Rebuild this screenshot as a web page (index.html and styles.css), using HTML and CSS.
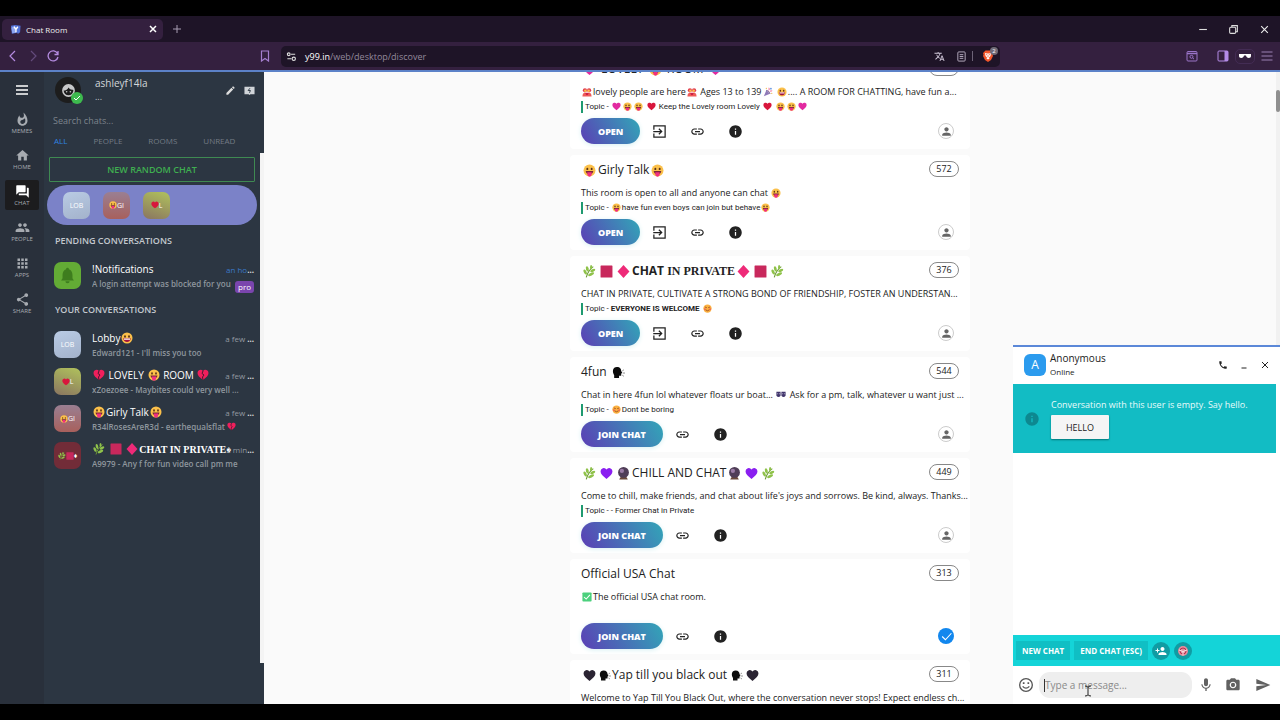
FILE: index.html
```
<!DOCTYPE html>
<html lang="en">
<head>
    <meta charset="UTF-8">
    <meta name="viewport" content="width=device-width, initial-scale=1.0">
    <title>Chat Room</title>
    <link rel="stylesheet" href="styles.css">
</head>
<body>

<!-- shared icons and emoji -->
<svg class="sprite" aria-hidden="true">
    <symbol id="tongue" viewBox="0 0 24 24"><circle cx="12" cy="12" r="11" fill="#fbc04a"/><ellipse cx="8" cy="9" rx="1.8" ry="2.3" fill="#5b3218"/><ellipse cx="16" cy="9" rx="1.8" ry="2.3" fill="#5b3218"/><path d="M5 13h14c-.5 4-3 6-7 6s-6.500-2-7-6z" fill="#7a2638"/><path d="M8 15h8v4.500a4 4 0 0 1-8 0z" fill="#f0307f"/></symbol>
    <symbol id="grin" viewBox="0 0 24 24"><circle cx="12" cy="12" r="11" fill="#fbc04a"/><ellipse cx="8" cy="9" rx="1.800" ry="2.500" fill="#5b3218"/><ellipse cx="16" cy="9" rx="1.800" ry="2.500" fill="#5b3218"/><path d="M4.500 12.500h15c-.5 5-3.500 7.500-7.500 7.500s-7-2.500-7.500-7.500z" fill="#a3123f"/><path d="M6 13h12v2.500H6z" fill="#fff"/></symbol>
    <symbol id="blush" viewBox="0 0 24 24"><circle cx="12" cy="12" r="11" fill="#fbb040"/><path d="M5 10q2.500-4 5 0M14 10q2.500-4 5 0M6 15q6 6 12 0" fill="none" stroke="#8a3d1c" stroke-width="2"/><circle cx="5" cy="14" r="2.500" fill="#f56a55"/><circle cx="19" cy="14" r="2.500" fill="#f56a55"/></symbol>
    <symbol id="heart" viewBox="0 0 24 24"><path d="M12 22C5 16.500 1 13 1 8a6 6 0 0 1 11-3.500A6 6 0 0 1 23 8c0 5-4 8.500-11 14z" fill="currentColor"/></symbol>
    <symbol id="broken" viewBox="0 0 24 24"><path d="M12 22C5 16.500 1 13 1 8a6 6 0 0 1 11-3.500A6 6 0 0 1 23 8c0 5-4 8.500-11 14z" fill="#f01f5c"/><path d="M12 4l-2 5 4 3-3 4 1 6" fill="none" stroke="#4a1830" stroke-width="2"/></symbol>
    <symbol id="couple" viewBox="0 0 24 24"><circle cx="7" cy="8" r="5" fill="#e2384f"/><circle cx="17" cy="8" r="5" fill="#e2384f"/><circle cx="8" cy="9" r="3" fill="#fbc04a"/><circle cx="16" cy="9" r="3" fill="#fbc04a"/><path d="M1 23c0-7 3-9 6-9h10c3 0 6 2 6 9z" fill="#ee5a58"/><path d="M12 20l-4-4 2-2 2 2 2-2 2 2z" fill="#c40f3f"/></symbol>
    <symbol id="party" viewBox="0 0 24 24"><path d="M2 22L8 8l9 8z" fill="#8f79b8"/><path d="M8 8c3 0 8 5 9 8" fill="none" stroke="#4d3e7a" stroke-width="2"/><path d="M13 8c3-1 2-4 1-6M16 11c2-2 4-1 6-2" fill="none" stroke="#e8407a" stroke-width="2"/><circle cx="19" cy="4" r="2" fill="#5c8fe0"/><circle cx="21" cy="15" r="1.500" fill="#f0b43c"/><circle cx="8" cy="3" r="1.500" fill="#f0b43c"/></symbol>
    <symbol id="leaf" viewBox="0 0 24 24"><path d="M6 23C8 15 12 8 19 3" fill="none" stroke="#6c9a35" stroke-width="2"/><g fill="#8fc24a"><ellipse cx="4" cy="13" rx="2.500" ry="5" transform="rotate(-25 4 13)"/><ellipse cx="8" cy="7" rx="2.500" ry="5" transform="rotate(-15 8 7)"/><ellipse cx="15" cy="4" rx="2" ry="4"/><ellipse cx="15" cy="17" rx="2.500" ry="6" transform="rotate(65 15 17)"/><ellipse cx="18" cy="10" rx="2.500" ry="5" transform="rotate(65 18 10)"/></g></symbol>
    <symbol id="square" viewBox="0 0 24 24"><rect x="1" y="1" width="22" height="22" rx="1" fill="#c8285c"/></symbol>
    <symbol id="diamond" viewBox="0 0 24 24"><path d="M12 0l11 12-11 12L1 12z" fill="#ee2a78"/></symbol>
    <symbol id="head" viewBox="0 0 24 24"><path d="M9 2c6 0 8 4 8 7l2 4-2 1v4h-4v4H4v-5C0 11 1 2 9 2z" fill="#0c0c0c"/><path d="M19 9l3-2M20 13h4M19 17l3 2" stroke="#777" stroke-width="1.500"/></symbol>
    <symbol id="masks" viewBox="0 0 24 24"><path d="M1 4h10v10q-5 6-10 0zM13 4h10v10q-5 6-10 0z" fill="#40356b"/><path d="M3 9h2M7 9h2M15 9h2M19 9h2" stroke="#d7d0ee" stroke-width="2"/></symbol>
    <symbol id="ball" viewBox="0 0 24 24"><path d="M4 23l3-5h10l3 5z" fill="#6b4a3a"/><circle cx="12" cy="10" r="10" fill="#4f3d57"/><circle cx="9" cy="7" r="4" fill="#9a7ca6"/></symbol>
    <symbol id="tick" viewBox="0 0 24 24"><rect x="1" y="1" width="22" height="22" rx="2" fill="#4cd07d"/><path d="M5 12l5 5 9-10" fill="none" stroke="#fff" stroke-width="2.500"/></symbol>
    <symbol id="enter" viewBox="0 0 24 24"><path d="M3 9V3h18v18H3v-6M2 12h13M11 7.500l4.500 4.500-4.500 4.500" fill="none" stroke="currentColor" stroke-width="2"/></symbol>
    <symbol id="link" viewBox="0 0 24 24"><path d="M3.900 12c0-1.710 1.390-3.100 3.100-3.100h4V7H7c-2.760 0-5 2.240-5 5s2.240 5 5 5h4v-1.900H7c-1.710 0-3.100-1.390-3.100-3.100zM8 13h8v-2H8v2zm9-6h-4v1.900h4c1.710 0 3.100 1.390 3.100 3.100s-1.390 3.100-3.100 3.100h-4V17h4c2.760 0 5-2.240 5-5s-2.240-5-5-5z" fill="currentColor"/></symbol>
    <symbol id="info" viewBox="0 0 24 24"><path d="M12 2C6.480 2 2 6.480 2 12s4.480 10 10 10 10-4.480 10-10S17.520 2 12 2zm1 15h-2v-6h2v6zm0-8h-2V7h2v2z" fill="currentColor"/></symbol>
    <symbol id="person" viewBox="0 0 24 24"><path d="M12 12c2.210 0 4-1.790 4-4s-1.790-4-4-4-4 1.790-4 4 1.790 4 4 4zm0 2c-2.670 0-8 1.340-8 4v2h16v-2c0-2.660-5.330-4-8-4z" fill="currentColor"/></symbol>
</svg>

<div class="browser">
    <div class="tabstrip">
        <div class="tab">
            <svg class="favicon" viewBox="0 0 24 24"><path d="M2 4l9-2 12 2-1 14-5 4-1-3-12 2z" fill="#5272d8"/><path d="M3 8l7-4 3 15-8 1z" fill="#8da5f2"/><path d="M9 6l4 6 4-6M13 12v6" fill="none" stroke="#fff" stroke-width="3"/></svg>
            <span>Chat Room</span>
            <button class="tab-close" aria-label="Close tab"><svg viewBox="0 0 10 10"><path d="M2 2l6 6M8 2l-6 6" stroke="#fff" stroke-width="1.500"/></svg></button>
        </div>
        <button class="new-tab" aria-label="New tab"><svg viewBox="0 0 10 10"><path d="M5 1v8M1 5h8" stroke="#a79db3"/></svg></button>
        <div class="window-buttons">
            <button aria-label="Minimize"><svg viewBox="0 0 10 10"><path d="M2 5h7" stroke="#ddd"/></svg></button>
            <button aria-label="Restore"><svg viewBox="0 0 10 10" fill="none" stroke="#ddd"><rect x="1.500" y="3" width="5.500" height="5.500" rx="1"/><path d="M3.500 3V1.500h5V7H7"/></svg></button>
            <button aria-label="Close"><svg viewBox="0 0 10 10"><path d="M2 2l6 6M8 2l-6 6" stroke="#eee"/></svg></button>
        </div>
    </div>

    <div class="toolbar">
        <div class="nav-buttons">
            <button aria-label="Back"><svg viewBox="0 0 12 12"><path d="M8 1L3 6l5 5" fill="none" stroke="#b48be0" stroke-width="1.200"/></svg></button>
            <button aria-label="Forward"><svg viewBox="0 0 12 12"><path d="M4 1l5 5-5 5" fill="none" stroke="#634b7c" stroke-width="1.200"/></svg></button>
            <button aria-label="Reload"><svg viewBox="0 0 12 12"><path d="M10.500 3.500A5 5 0 1 0 11 7M11 1v3.500H7.500" fill="none" stroke="#b48be0" stroke-width="1.300"/></svg></button>
        </div>
        <button class="bookmark" aria-label="Bookmark"><svg viewBox="0 0 12 12"><path d="M2.500 1h7v10L6 8.500 2.500 11z" fill="none" stroke="#a67fd0" stroke-width="1.200"/></svg></button>
        <div class="address">
            <svg viewBox="0 0 12 12" fill="none" stroke="#ddd" stroke-width="1.200"><circle cx="3" cy="3.500" r="1.500"/><path d="M5.500 3.500H10M1.500 8.500H6"/><circle cx="8.500" cy="8.500" r="1.800"/></svg>
            <span class="url"><b>y99.in</b>/web/desktop/discover</span>
            <button aria-label="Translate"><svg viewBox="0 0 24 24"><path d="M12.870 15.070l-2.540-2.510.03-.03c1.740-1.940 2.980-4.170 3.710-6.530H17V4h-7V2H8v2H1v1.990h11.170C11.500 7.920 10.440 9.750 9 11.350 8.070 10.320 7.300 9.190 6.690 8h-2c.73 1.630 1.730 3.170 2.980 4.560l-5.090 5.020L4 19l5-5 3.110 3.110.76-2.040zM18.500 10h-2L12 22h2l1.120-3h4.750L21 22h2l-4.500-12zm-2.620 7l1.620-4.330L19.120 17h-3.240z" fill="#cfc6d8"/></svg></button>
            <button aria-label="Reader"><svg viewBox="0 0 12 12" fill="none" stroke="#bdb3c7"><rect x="2" y="1" width="8" height="10" rx="1"/><path d="M4 4h4M4 6h4M4 8h4"/></svg></button>
            <span class="bar"></span>
            <button class="shields" aria-label="Shields, 2 blocked"><svg viewBox="0 0 24 24"><path d="M7 1h10l5 5-1 3 1 3-4 8-6 4-6-4-4-8 1-3-1-3z" fill="#f1562b"/><path d="M6 6l4 1h4l4-1-1 6-3 3 1 2-3 2-3-2 1-2-3-3z" fill="#fff"/><path d="M8 9l3 1M16 9l-3 1M12 11v4" stroke="#f1562b" stroke-width="1.500"/></svg><span>2</span></button>
        </div>
        <div class="toolbar-end">
            <button aria-label="Search tabs"><svg viewBox="0 0 12 12" fill="none" stroke="#9a74c8"><rect x="1" y="1.500" width="10" height="9.500" rx="1"/><path d="M1 3.500h10" stroke-width="1.500"/><circle cx="5.500" cy="6.800" r="1.500"/><path d="M6.800 8L8 9.200"/></svg></button>
            <button aria-label="Sidebar"><svg viewBox="0 0 12 12"><rect x="1" y="1" width="10" height="10" rx="1" fill="none" stroke="#b48be8"/><path d="M7.500 1H11v10H7.500z" fill="#b48be8"/></svg></button>
            <button class="private" aria-label="Private window"><svg viewBox="0 0 12 12"><path d="M0 4h12v2c0 1-.8 2-2.200 2C8.200 8 7.300 7 7 5.500H5C4.700 7 3.800 8 2.200 8 .8 8 0 7 0 6z" fill="#fff"/></svg></button>
            <button aria-label="Menu"><svg viewBox="0 0 12 12"><path d="M.5 2h11M.5 6h11M.5 10h11" stroke="#9a80b4" stroke-width="1.200"/></svg></button>
        </div>
    </div>

    <div class="app">
        <nav class="rail">
            <button class="hamburger" aria-label="Menu"><svg viewBox="0 0 12 12"><path d="M0 2h12M0 6h12M0 10h12" stroke="#fff" stroke-width="1.500"/></svg></button>
            <a href="#memes"><svg viewBox="0 0 24 24"><path d="M13.500.67s.74 2.650.74 4.800c0 2.060-1.350 3.730-3.410 3.730-2.070 0-3.630-1.670-3.630-3.730l.03-.36C5.210 7.510 4 10.620 4 14c0 4.420 3.580 8 8 8s8-3.580 8-8C20 8.610 17.410 3.800 13.500.67zM11.710 19c-1.780 0-3.220-1.400-3.220-3.140 0-1.620 1.050-2.760 2.810-3.120 1.770-.36 3.600-1.210 4.620-2.580.39 1.290.59 2.650.59 4.040 0 2.650-2.150 4.800-4.800 4.800z" fill="currentColor"/></svg>MEMES</a>
            <a href="#home"><svg viewBox="0 0 24 24"><path d="M10 20v-6h4v6h5v-8h3L12 3 2 12h3v8z" fill="currentColor"/></svg>HOME</a>
            <a href="#chat" class="active"><svg viewBox="0 0 24 24"><path d="M21 6h-2v9H6v2c0 .55.45 1 1 1h11l4 4V7c0-.55-.45-1-1-1zm-4 6V3c0-.55-.45-1-1-1H3c-.55 0-1 .45-1 1v14l4-4h10c.55 0 1-.45 1-1z" fill="currentColor"/></svg>CHAT</a>
            <a href="#people"><svg viewBox="0 0 24 24"><path d="M16 11c1.660 0 2.990-1.340 2.990-3S17.660 5 16 5c-1.660 0-3 1.340-3 3s1.340 3 3 3zm-8 0c1.660 0 2.990-1.340 2.990-3S9.660 5 8 5C6.340 5 5 6.340 5 8s1.340 3 3 3zm0 2c-2.330 0-7 1.170-7 3.500V19h14v-2.500c0-2.330-4.670-3.500-7-3.500zm8 0c-.29 0-.62.02-.97.05 1.160.84 1.970 1.970 1.970 3.450V19h6v-2.500c0-2.330-4.670-3.500-7-3.500z" fill="currentColor"/></svg>PEOPLE</a>
            <a href="#apps"><svg viewBox="0 0 24 24"><path d="M4 8h4V4H4v4zm6 12h4v-4h-4v4zm-6 0h4v-4H4v4zm0-6h4v-4H4v4zm6 0h4v-4h-4v4zm6-10v4h4V4h-4zm-6 4h4V4h-4v4zm6 6h4v-4h-4v4zm0 6h4v-4h-4v4z" fill="currentColor"/></svg>APPS</a>
            <a href="#share"><svg viewBox="0 0 24 24"><path d="M18 16.080c-.76 0-1.440.3-1.960.77L8.910 12.700c.05-.23.090-.46.090-.7s-.04-.47-.09-.7l7.050-4.110c.54.5 1.250.81 2.040.81 1.660 0 3-1.340 3-3s-1.340-3-3-3-3 1.340-3 3c0 .24.040.47.090.7L8.040 9.810C7.500 9.310 6.790 9 6 9c-1.660 0-3 1.340-3 3s1.340 3 3 3c.79 0 1.500-.31 2.040-.81l7.120 4.160c-.05.210-.08.430-.08.650 0 1.610 1.310 2.920 2.920 2.920s2.920-1.310 2.920-2.920-1.310-2.920-2.920-2.920z" fill="currentColor"/></svg>SHARE</a>
        </nav>

        <aside class="sidebar">
            <div class="profile">
                <div class="avatar round">
                    <svg viewBox="0 0 24 24"><circle cx="12" cy="12" r="9" fill="none" stroke="#c9c9c9" stroke-width="2.500"/><path d="M3 12c5 0 8-2 9-5 2 3 5 4 9 4C20 5 17 3 12 3S4 6 3 12z" fill="#c9c9c9"/><circle cx="9" cy="14" r="1.300" fill="#c9c9c9"/><circle cx="15" cy="14" r="1.300" fill="#c9c9c9"/></svg>
                    <svg class="verified" viewBox="0 0 24 24"><circle cx="12" cy="12" r="12" fill="#3dba4e"/><path d="M6 12l4 4 8-8" fill="none" stroke="#fff" stroke-width="2"/></svg>
                </div>
                <div class="who">
                    <div class="name">ashleyf14la</div>
                    <div>...</div>
                </div>
                <button aria-label="Edit"><svg viewBox="0 0 24 24"><path d="M3 17.250V21h3.750L17.810 9.940l-3.750-3.750L3 17.250zM20.710 7.040a1 1 0 0 0 0-1.410l-2.340-2.340a1 1 0 0 0-1.410 0l-1.830 1.830 3.750 3.750 1.830-1.830z" fill="#ddd"/></svg></button>
                <button aria-label="Alerts"><svg viewBox="0 0 24 24"><path d="M1 4h22v16h-9l-2 2-2-2H1z" fill="#d0d4d8"/><path d="M13 7l-4 5h5l-2 5" fill="none" stroke="#2b3642" stroke-width="2"/></svg></button>
            </div>
            <input class="search" type="text" placeholder="Search chats..." aria-label="Search chats">
            <div class="filters">
                <button class="on">ALL</button>
                <button>PEOPLE</button>
                <button>ROOMS</button>
                <button>UNREAD</button>
            </div>

            <div class="list">
                <button class="random">NEW RANDOM CHAT</button>
                <div class="pinned">
                    <div class="avatar lob">LOB</div>
                    <div class="avatar girly"><svg><use href="#tongue"/></svg>GI</div>
                    <div class="avatar lovely"><svg class="red"><use href="#heart"/></svg>L</div>
                </div>

                <h2>PENDING CONVERSATIONS</h2>
                <div class="chat">
                    <div class="avatar bell"><svg viewBox="0 0 24 24"><path d="M12 1a2 2 0 0 1 2 2c3 1 5 4 5 8v5l2 3H3l2-3v-5c0-4 2-7 5-8a2 2 0 0 1 2-2zM9 20h6a3 3 0 0 1-6 0z" fill="#3e7d1e"/></svg></div>
                    <div class="text">
                        <div class="top"><span class="name">!Notifications</span><time class="blue">an ho<b>...</b></time></div>
                        <p>A login attempt was blocked for you</p>
                    </div>
                    <span class="pro">pro</span>
                </div>

                <h2>YOUR CONVERSATIONS</h2>
                <div class="chat">
                    <div class="avatar lob">LOB</div>
                    <div class="text">
                        <div class="top"><span class="name">Lobby<svg><use href="#grin"/></svg></span><time>a few <b>...</b></time></div>
                        <p>Edward121 - I'll miss you too</p>
                    </div>
                </div>
                <div class="chat">
                    <div class="avatar lovely"><svg class="red"><use href="#heart"/></svg>L</div>
                    <div class="text">
                        <div class="top"><span class="name"><svg><use href="#broken"/></svg> LOVELY <svg><use href="#tongue"/></svg> ROOM <svg><use href="#broken"/></svg></span><time>a few <b>...</b></time></div>
                        <p>xZoezoee - Maybites could very well ...</p>
                    </div>
                </div>
                <div class="chat">
                    <div class="avatar girly"><svg><use href="#tongue"/></svg>GI</div>
                    <div class="text">
                        <div class="top"><span class="name"><svg><use href="#tongue"/></svg>Girly Talk<svg><use href="#tongue"/></svg></span><time>a few <b>...</b></time></div>
                        <p>R34lRosesAreR3d - earthequalsflat <svg><use href="#broken"/></svg></p>
                    </div>
                </div>
                <div class="chat">
                    <div class="avatar private-room"><svg><use href="#leaf"/></svg><svg><use href="#square"/></svg>♦</div>
                    <div class="text">
                        <div class="top"><span class="name"><svg><use href="#leaf"/></svg> <svg><use href="#square"/></svg> <svg><use href="#diamond"/></svg><b class="serif">CHAT IN PRIVATE♦</b></span><time>2 min<b>...</b></time></div>
                        <p>A9979 - Any f for fun video call pm me</p>
                    </div>
                </div>
            </div>
        </aside>

        <main class="main">
            <div class="feed">
                <article class="room">
                    <header><h3><svg class="pink"><use href="#heart"/></svg> LOVELY <svg><use href="#tongue"/></svg> ROOM <svg class="pink"><use href="#heart"/></svg></h3><span class="count">588</span></header>
                    <p class="about"><svg><use href="#couple"/></svg>lovely people are here<svg><use href="#couple"/></svg> Ages 13 to 139<svg><use href="#party"/></svg> <svg><use href="#grin"/></svg>.... A ROOM FOR CHATTING, have fun a...</p>
                    <p class="topic">Topic - <svg class="pink"><use href="#heart"/></svg><svg><use href="#tongue"/></svg><svg><use href="#tongue"/></svg> <svg class="red"><use href="#heart"/></svg> Keep the Lovely room Lovely <svg class="red"><use href="#heart"/></svg> <svg><use href="#tongue"/></svg><svg><use href="#tongue"/></svg><svg class="pink"><use href="#heart"/></svg></p>
                    <footer>
                        <button class="go">OPEN</button>
                        <button class="icon" aria-label="Enter"><svg><use href="#enter"/></svg></button>
                        <button class="icon" aria-label="Copy link"><svg><use href="#link"/></svg></button>
                        <button class="icon" aria-label="Info"><svg><use href="#info"/></svg></button>
                        <span class="owner"><svg><use href="#person"/></svg></span>
                    </footer>
                </article>

                <article class="room">
                    <header><h3><svg><use href="#tongue"/></svg>Girly Talk<svg><use href="#tongue"/></svg></h3><span class="count">572</span></header>
                    <p class="about">This room is open to all and anyone can chat <svg><use href="#tongue"/></svg></p>
                    <p class="topic">Topic - <svg><use href="#tongue"/></svg>have fun even boys can join but behave<svg><use href="#tongue"/></svg></p>
                    <footer>
                        <button class="go">OPEN</button>
                        <button class="icon" aria-label="Enter"><svg><use href="#enter"/></svg></button>
                        <button class="icon" aria-label="Copy link"><svg><use href="#link"/></svg></button>
                        <button class="icon" aria-label="Info"><svg><use href="#info"/></svg></button>
                        <span class="owner"><svg><use href="#person"/></svg></span>
                    </footer>
                </article>

                <article class="room">
                    <header><h3><svg><use href="#leaf"/></svg><svg><use href="#square"/></svg><svg><use href="#diamond"/></svg><b>CHAT</b> <b class="serif">IN PRIVATE</b><svg><use href="#diamond"/></svg><svg><use href="#square"/></svg><svg><use href="#leaf"/></svg></h3><span class="count">376</span></header>
                    <p class="about">CHAT IN PRIVATE, CULTIVATE A STRONG BOND OF FRIENDSHIP, FOSTER AN UNDERSTAN...</p>
                    <p class="topic">Topic - <b>EVERYONE IS WELCOME</b> <svg><use href="#blush"/></svg></p>
                    <footer>
                        <button class="go">OPEN</button>
                        <button class="icon" aria-label="Enter"><svg><use href="#enter"/></svg></button>
                        <button class="icon" aria-label="Copy link"><svg><use href="#link"/></svg></button>
                        <button class="icon" aria-label="Info"><svg><use href="#info"/></svg></button>
                        <span class="owner"><svg><use href="#person"/></svg></span>
                    </footer>
                </article>

                <article class="room">
                    <header><h3>4fun <svg><use href="#head"/></svg></h3><span class="count">544</span></header>
                    <p class="about">Chat in here 4fun lol whatever floats ur boat... <svg><use href="#masks"/></svg> Ask for a pm, talk, whatever u want just ...</p>
                    <p class="topic">Topic - <svg><use href="#blush"/></svg>Dont be boring</p>
                    <footer>
                        <button class="go">JOIN CHAT</button>
                        <button class="icon" aria-label="Copy link"><svg><use href="#link"/></svg></button>
                        <button class="icon" aria-label="Info"><svg><use href="#info"/></svg></button>
                        <span class="owner"><svg><use href="#person"/></svg></span>
                    </footer>
                </article>

                <article class="room">
                    <header><h3><svg><use href="#leaf"/></svg><svg class="purple"><use href="#heart"/></svg><svg><use href="#ball"/></svg>CHILL AND CHAT<svg><use href="#ball"/></svg><svg class="purple"><use href="#heart"/></svg><svg><use href="#leaf"/></svg></h3><span class="count">449</span></header>
                    <p class="about">Come to chill, make friends, and chat about life's joys and sorrows. Be kind, always. Thanks...</p>
                    <p class="topic">Topic - - Former Chat in Private</p>
                    <footer>
                        <button class="go">JOIN CHAT</button>
                        <button class="icon" aria-label="Copy link"><svg><use href="#link"/></svg></button>
                        <button class="icon" aria-label="Info"><svg><use href="#info"/></svg></button>
                        <span class="owner"><svg><use href="#person"/></svg></span>
                    </footer>
                </article>

                <article class="room">
                    <header><h3>Official USA Chat</h3><span class="count">313</span></header>
                    <p class="about"><svg><use href="#tick"/></svg>The official USA chat room.</p>
                    <footer>
                        <button class="go">JOIN CHAT</button>
                        <button class="icon" aria-label="Copy link"><svg><use href="#link"/></svg></button>
                        <button class="icon" aria-label="Info"><svg><use href="#info"/></svg></button>
                        <span class="owner official"><svg viewBox="0 0 24 24"><path d="M4 12l6 6L21 6" fill="none" stroke="#fff" stroke-width="2"/></svg></span>
                    </footer>
                </article>

                <article class="room">
                    <header><h3><svg class="black"><use href="#heart"/></svg><svg class="tight"><use href="#head"/></svg>Yap till you black out <svg class="tight"><use href="#head"/></svg><svg class="black"><use href="#heart"/></svg></h3><span class="count">311</span></header>
                    <p class="about">Welcome to Yap Till You Black Out, where the conversation never stops! Expect endless ch...</p>
                    <footer>
                        <button class="go">JOIN CHAT</button>
                    </footer>
                </article>
            </div>
            <div class="scrollbar"><div class="thumb"></div></div>
        </main>

        <section class="popup">
            <header>
                <div class="avatar anon">A</div>
                <div class="who">
                    <div class="name">Anonymous</div>
                    <div>Online</div>
                </div>
                <button aria-label="Call"><svg viewBox="0 0 24 24"><path d="M6.620 10.790c1.440 2.830 3.760 5.140 6.590 6.590l2.200-2.200c.27-.27.67-.36 1.020-.24 1.120.37 2.330.57 3.570.57.55 0 1 .45 1 1V20c0 .55-.45 1-1 1-9.390 0-17-7.610-17-17 0-.55.45-1 1-1h3.500c.55 0 1 .45 1 1 0 1.250.2 2.450.57 3.570.11.35.03.74-.25 1.020l-2.200 2.200z" fill="#222"/></svg></button>
                <button aria-label="Minimize"><svg viewBox="0 0 10 10"><path d="M2.500 8h5" stroke="#222"/></svg></button>
                <button aria-label="Close"><svg viewBox="0 0 10 10"><path d="M2 2l6 6M8 2l-6 6" stroke="#222"/></svg></button>
            </header>
            <div class="notice">
                <svg><use href="#info"/></svg>
                <div>
                    <p>Conversation with this user is empty. Say hello.</p>
                    <button>HELLO</button>
                </div>
            </div>
            <div class="messages"></div>
            <div class="chat-actions">
                <button>NEW CHAT</button>
                <button>END CHAT (ESC)</button>
                <button class="dot" aria-label="Add friend"><svg viewBox="0 0 24 24"><path d="M15 12c2.210 0 4-1.790 4-4s-1.790-4-4-4-4 1.790-4 4 1.790 4 4 4zm-9-2V7H4v3H1v2h3v3h2v-3h3v-2H6zm9 4c-2.670 0-8 1.340-8 4v2h16v-2c0-2.660-5.330-4-8-4z" fill="#fff"/></svg></button>
                <button class="dot" aria-label="Games"><svg viewBox="0 0 24 24"><circle cx="12" cy="12" r="10" fill="#e58c9c"/><circle cx="12" cy="12" r="6" fill="none" stroke="#b3324f" stroke-width="2"/><path d="M4 10l8 3 8-3M12 13v8" stroke="#fbe3e6" stroke-width="2" fill="none"/></svg></button>
            </div>
            <form class="composer">
                <button type="button" aria-label="Emoji"><svg viewBox="0 0 24 24" fill="none" stroke="#555" stroke-width="2"><circle cx="12" cy="12" r="9.500"/><path d="M7 14q5 5.500 10 0"/><path d="M8.500 8v2.500M15.500 8v2.500" stroke-width="2.500"/></svg></button>
                <div class="field"><input type="text" placeholder="Type a message..." aria-label="Message"></div>
                <button type="button" aria-label="Record"><svg viewBox="0 0 24 24"><path d="M12 14c1.660 0 2.990-1.340 2.990-3L15 5c0-1.660-1.340-3-3-3S9 3.340 9 5v6c0 1.660 1.340 3 3 3zm5.300-3c0 3-2.540 5.100-5.300 5.100S6.700 14 6.700 11H5c0 3.410 2.720 6.230 6 6.720V21h2v-3.280c3.280-.48 6-3.300 6-6.720h-1.700z" fill="#616161"/></svg></button>
                <button type="button" aria-label="Photo"><svg viewBox="0 0 24 24"><circle cx="12" cy="12" r="3.200" fill="#616161"/><path d="M9 2L7.170 4H4c-1.100 0-2 .9-2 2v12c0 1.100.9 2 2 2h16c1.100 0 2-.9 2-2V6c0-1.100-.9-2-2-2h-3.170L15 2H9zm3 15c-2.760 0-5-2.240-5-5s2.240-5 5-5 5 2.240 5 5-2.240 5-5 5z" fill="#616161"/></svg></button>
                <button class="send" type="submit" aria-label="Send"><svg viewBox="0 0 24 24"><path d="M2.010 21L23 12 2.010 3 2 10l15 2-15 2z" fill="#616161"/></svg></button>
            </form>
            <svg class="pointer" viewBox="0 0 8 12"><path d="M1 1q3 0 3 1.500v7Q4 11 1 11M7 1Q4 1 4 2.500M4 9.500Q4 11 7 11" fill="none" stroke="#222"/></svg>
        </section>
    </div>
</div>

</body>
</html>
```
FILE: styles.css
```
* {
    box-sizing: border-box;
}
body {
    margin: 0;
    background-color: #000;
    color: #222;
    font-family: "Open Sans", "Noto Sans", sans-serif;
    font-size: 9px;
}
h2, h3, p {
    margin: 0;
    font-weight: normal;
}
button, input {
    padding: 0;
    border: none;
    background: none;
    color: inherit;
    font-family: inherit;
    font-size: inherit;
}
button {
    display: flex;
    align-items: center;
    justify-content: center;
    cursor: pointer;
}
button svg {
    width: 12px;
    height: 12px;
}
.sprite {
    position: absolute;
    width: 0;
    height: 0;
}
.browser {
    display: flex;
    flex-direction: column;
    height: 100vh;
    padding: 16px 0;
}

/* browser frame */
.tabstrip {
    display: flex;
    align-items: center;
    height: 26px;
    flex-shrink: 0;
    padding-left: 2px;
    background-color: #1e1427;
}
.tab {
    display: flex;
    align-items: center;
    gap: 5px;
    width: 161px;
    height: 21px;
    padding: 0 5px 0 8px;
    border-radius: 5px;
    background-color: #34203f;
    color: #eee;
    font-size: 8px;
}
.favicon {
    width: 11px;
    height: 11px;
}
.tab-close {
    margin-left: auto;
}
.tab-close svg {
    width: 10px;
    height: 10px;
}
.new-tab {
    margin-left: 9px;
}
.new-tab svg {
    width: 10px;
    height: 10px;
}
.window-buttons {
    display: flex;
    gap: 20px;
    margin-left: auto;
    padding-right: 10px;
}
.window-buttons svg {
    width: 11px;
    height: 11px;
}
.toolbar {
    display: flex;
    align-items: center;
    height: 30px;
    flex-shrink: 0;
    border-bottom: 2px solid #5c82c8;
    background-color: #34203f;
}
.nav-buttons {
    display: flex;
    gap: 8px;
    padding-left: 7px;
}
.bookmark {
    margin: 0 10px 0 200px;
}
.address {
    display: flex;
    flex: 1;
    align-items: center;
    gap: 11px;
    height: 21px;
    padding: 0 6px 0 5px;
    border-radius: 5px;
    background-color: #1e1427;
}
.address svg {
    width: 11px;
    height: 11px;
}
.url {
    flex: 1;
    margin-left: -3px;
    color: #93899c;
}
.url b {
    color: #fff;
    font-weight: normal;
}
.bar {
    width: 1px;
    height: 10px;
    margin: 0 -2px 0 -6px;
    background-color: #6d6377;
}
.shields {
    position: relative;
}
.address .shields svg {
    width: 12px;
    height: 12px;
}
.shields span {
    position: absolute;
    top: -3px;
    right: -4px;
    width: 8px;
    height: 8px;
    border-radius: 50%;
    background-color: #6f6a76;
    color: #fff;
    font-size: 6px;
    line-height: 8px;
}
.toolbar-end {
    display: flex;
    align-items: center;
    gap: 10px;
    padding: 0 7px 0 186px;
}
.toolbar-end button:first-child {
    margin-right: 9px;
}
.private {
    width: 20px;
    margin: 0 -4px;
    height: 15px;
    border: 1px solid #432c54;
    border-radius: 5px;
}

/* app */
.app {
    position: relative;
    display: flex;
    flex: 1;
    min-height: 0;
    overflow: hidden;
    background-color: #fafafa;
}
.rail {
    display: flex;
    flex-direction: column;
    align-items: center;
    gap: 6px;
    width: 44px;
    flex-shrink: 0;
    background-color: #29303b;
    color: #a7abb1;
}
.rail a {
    display: flex;
    flex-direction: column;
    align-items: center;
    justify-content: center;
    width: 34px;
    height: 30px;
    border-radius: 2px;
    color: inherit;
    font-size: 6px;
    line-height: 8px;
    text-decoration: none;
}
.rail a svg {
    width: 15px;
    height: 15px;
}
.rail .active {
    background-color: #1c1c1e;
}
.rail .active svg {
    color: #fff;
}
.hamburger {
    height: 30px;
    padding-top: 6px;
}

.avatar {
    display: flex;
    align-items: center;
    justify-content: center;
    width: 27px;
    height: 27px;
    flex-shrink: 0;
    border-radius: 7px;
    color: #fff;
    font-size: 7px;
}
.avatar svg {
    width: 8px;
    height: 8px;
}
.lob {
    background: linear-gradient(160deg, #b9cbe4, #a3b2cb);
}
.girly {
    background: linear-gradient(#9a7f92, #a8605c);
}
.lovely {
    background: linear-gradient(200deg, #b0c25c, #8a7560);
}
.private-room {
    background-color: #722c38;
}
.bell {
    background-color: #63ab35;
}
.avatar.bell svg {
    width: 17px;
    height: 17px;
}
.red {
    color: #d8163c;
}
.pink {
    color: #e22aa0;
}
.purple {
    color: #8a1ff0;
}
.black {
    color: #2b2433;
}

.sidebar {
    display: flex;
    flex-direction: column;
    width: 220px;
    flex-shrink: 0;
    background-color: #2c3642;
    color: #c3c8ce;
}
.profile {
    display: flex;
    align-items: center;
    gap: 8px;
    height: 36px;
    padding: 0 9px 0 11px;
}
.profile .who {
    flex: 1;
    padding-left: 6px;
    line-height: 13px;
}
.profile .name {
    font-size: 10px;
    color: #d3d7da;
}
.profile button svg {
    width: 11px;
    height: 11px;
}
.avatar.round {
    position: relative;
    width: 26px;
    height: 26px;
    border-radius: 50%;
    background-color: #1d1d1d;
}
.avatar.round svg {
    width: 15px;
    height: 15px;
}
.avatar.round .verified {
    position: absolute;
    right: -2px;
    bottom: -1px;
    width: 12px;
    height: 12px;
}
.search {
    height: 24px;
    padding-left: 9px;
}
.search::placeholder {
    color: #7c848c;
    opacity: 1;
}
.filters {
    display: flex;
    gap: 26px;
    height: 21px;
    padding: 0 0 4px 10px;
    color: #737b84;
    font-size: 8px;
}
.filters .on {
    color: #2f83e0;
}
.list {
    width: 216px;
    height: 510px;
    padding: 4px 3px 0;
    box-shadow: 4px 0 0 #f4f4f4;
}
.random {
    width: 206px;
    height: 25px;
    margin: 0 2px 3px;
    border: 1px solid #3f8a52;
    border-radius: 1px;
    color: #3fae50;
    font-weight: 600;
}
.pinned {
    display: flex;
    align-items: center;
    gap: 13px;
    height: 40px;
    padding-left: 16px;
    border-radius: 20px;
    background-color: #7b82c8;
}
.list h2 {
    padding: 0 8px;
    font-size: 9px;
    font-weight: 600;
    line-height: 32px;
}
.chat {
    position: relative;
    display: flex;
    align-items: center;
    gap: 11px;
    height: 37px;
    padding: 0 3px 0 7px;
}
.chat .text {
    flex: 1;
    min-width: 0;
}
.chat .top {
    display: flex;
    align-items: center;
    justify-content: space-between;
    height: 15px;
    white-space: nowrap;
}
.chat .name {
    min-width: 0;
    color: #fff;
    font-size: 10px;
}
.chat .name svg {
    width: 12px;
    height: 12px;
    margin: 0 1px;
    vertical-align: -2px;
}
.chat time {
    flex-shrink: 0;
    color: #9299a1;
    font-size: 8px;
}
.chat time.blue {
    color: #3a78c8;
}
.chat time b {
    color: #ddd;
}
.chat p {
    overflow: hidden;
    color: #8f969e;
    font-size: 8px;
    font-weight: 600;
    line-height: 13px;
    white-space: nowrap;
}
.chat p svg {
    width: 9px;
    height: 9px;
    vertical-align: -1px;
}
.serif {
    font-family: "Liberation Serif", serif;
}
.pro {
    position: absolute;
    right: 3px;
    bottom: 1px;
    padding: 0 3px;
    border-radius: 3px;
    background-color: #7a45ad;
    color: #fff;
    font-size: 8px;
    line-height: 12px;
}

/* room list */
.main {
    display: flex;
    flex: 1;
    justify-content: center;
    min-width: 0;
    overflow: hidden;
}
.feed {
    display: flex;
    flex-direction: column;
    gap: 6px;
    width: 400px;
    margin: -18px auto 0;
}
.room {
    display: flex;
    flex-direction: column;
    height: 95px;
    flex-shrink: 0;
    padding: 4px 11px 5px;
    border-radius: 4px;
    background-color: #fff;
}
.room header {
    display: flex;
    align-items: center;
    justify-content: space-between;
    height: 20px;
    margin-bottom: 6px;
}
.room h3 {
    font-size: 12px;
}
.room h3 svg {
    width: 13px;
    height: 13px;
    margin: 0 2px;
    vertical-align: -3px;
}
.room h3 .tight {
    width: 12px;
    margin: 0 1px;
}
.count {
    width: 30px;
    border: 1px solid #888;
    border-radius: 8px;
    line-height: 14px;
    text-align: center;
}
.about {
    line-height: 16px;
    white-space: nowrap;
}
.about svg {
    width: 10px;
    height: 10px;
    margin: 0 1px;
    vertical-align: -2px;
}
.topic {
    align-self: flex-start;
    margin-top: 1px;
    padding-left: 2px;
    border-left: 2px solid #1f9a70;
    font-family: Roboto, "Open Sans", sans-serif;
    font-size: 8px;
    line-height: 12px;
}
.topic svg {
    width: 9px;
    height: 9px;
    margin: 0 1px;
    vertical-align: -2px;
}
.room footer {
    display: flex;
    align-items: center;
    gap: 23px;
    margin-top: auto;
}
.go {
    height: 26px;
    margin-right: -11px;
    padding: 0 17px;
    border-radius: 13px;
    background: linear-gradient(60deg, #5b3fb5, #32a6b8);
    color: #fff;
    font-weight: 800;
    box-shadow: 0 1px 5px #d6f0f2;
}
.icon svg {
    width: 15px;
    height: 15px;
}
.owner {
    display: flex;
    align-items: center;
    justify-content: center;
    width: 16px;
    height: 16px;
    margin: 0 5px 0 auto;
    border: 1px solid #ccc;
    border-radius: 50%;
    color: #666;
}
.owner svg {
    width: 13px;
    height: 13px;
}
.official {
    border: none;
    background-color: #1287ee;
}
.scrollbar {
    width: 4px;
    padding-top: 18px;
    background-color: #f1f1f1;
}
.thumb {
    height: 22px;
    border-radius: 2px;
    background-color: #8f8f8f;
}

/* chat window */
.popup {
    position: absolute;
    right: 0;
    bottom: 0;
    display: flex;
    flex-direction: column;
    width: 267px;
    height: 359px;
    border-top: 2px solid #5b88d8;
    background-color: #fff;
}
.popup header {
    display: flex;
    align-items: center;
    gap: 11px;
    height: 37px;
    padding: 0 10px 2px 11px;
}
.popup .who {
    flex: 1;
    margin-left: -7px;
    font-size: 8px;
    line-height: 14px;
}
.popup .name {
    font-size: 10px;
}
.avatar.anon {
    width: 22px;
    height: 22px;
    border-radius: 6px;
    background-color: #2b9bee;
    font-size: 12px;
}
.popup header svg {
    width: 10px;
    height: 10px;
}
.notice {
    display: flex;
    align-items: center;
    gap: 11px;
    height: 69px;
    margin-right: 4px;
    padding-left: 11px;
    background-color: #12bcc4;
    color: #e8fbfb;
}
.notice svg {
    width: 16px;
    height: 16px;
    color: #0d8890;
}
.notice button {
    width: 58px;
    height: 24px;
    margin-top: 4px;
    border-radius: 1px;
    background-color: #f5f5f5;
    color: #222;
    box-shadow: 0 1px 2px #077;
}
.messages {
    flex: 1;
}
.chat-actions {
    display: flex;
    align-items: center;
    gap: 4px;
    height: 31px;
    padding-left: 3px;
    background-color: #14d4d8;
    color: #fff;
    font-size: 8px;
}
.chat-actions button {
    height: 19px;
    padding: 0 6px;
    background-color: #10bfc4;
    font-weight: 700;
}
.chat-actions .dot {
    width: 18px;
    height: 18px;
    padding: 0;
    border-radius: 50%;
    background-color: #109ca3;
}
.dot svg {
    width: 12px;
    height: 12px;
}
.composer {
    display: flex;
    align-items: center;
    gap: 11px;
    height: 38px;
    padding: 0 9px 0 5px;
}
.composer button svg {
    width: 16px;
    height: 16px;
}
.composer .send {
    margin-left: 3px;
}
.field {
    display: flex;
    flex: 1;
    align-items: center;
    height: 26px;
    margin: 0 -5px 0 -6px;
    padding-left: 5px;
    border-radius: 11px;
    background-color: #eee;
}
.field::before {
    width: 1px;
    height: 13px;
    background-color: #333;
    content: "";
}
.field input {
    flex: 1;
    min-width: 0;
    font-size: 10px;
}
.field input::placeholder {
    color: #8a8a8a;
    opacity: 1;
}
.pointer {
    position: absolute;
    right: 188px;
    bottom: 7px;
    width: 8px;
    height: 12px;
}
```
